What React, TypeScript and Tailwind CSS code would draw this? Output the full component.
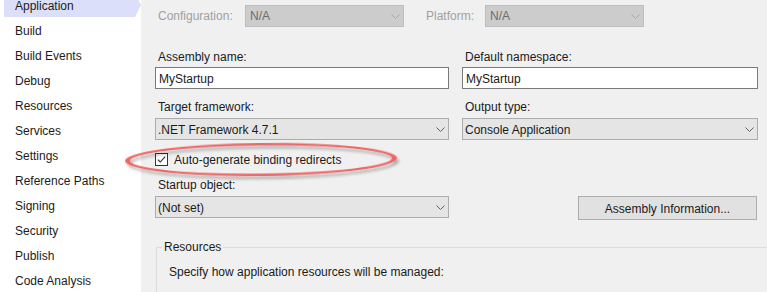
import React from "react";

const navItems = [
  "Application",
  "Build",
  "Build Events",
  "Debug",
  "Resources",
  "Services",
  "Settings",
  "Reference Paths",
  "Signing",
  "Security",
  "Publish",
  "Code Analysis",
];

function Chevron({ color = "#606060" }: { color?: string }) {
  return (
    <svg width="9" height="5" viewBox="0 0 9 5" className="shrink-0">
      <path d="M0.5 0.5 L4.5 4.5 L8.5 0.5" fill="none" stroke={color} strokeWidth="1" />
    </svg>
  );
}

function Select({ value, className = "" }: { value: string; className?: string }) {
  return (
    <div
      className={`flex items-center justify-between h-[22px] border border-[#acacac] bg-[#e5e5e5] pl-[2px] pr-[3px] text-[#1b1b1b] ${className}`}
    >
      <span className="leading-[16px] pt-[1px]">{value}</span>
      <Chevron />
    </div>
  );
}

function DisabledSelect({ value }: { value: string }) {
  return (
    <div className="flex items-center justify-between w-[159px] h-[22px] border border-[#bfbfbf] bg-[#cccccc] pl-[4px] pr-[3px] text-[#6d6d6d]">
      <span className="leading-[16px]">{value}</span>
      <Chevron color="#a6a6a6" />
    </div>
  );
}

function TextInput({ value }: { value: string }) {
  return (
    <div className="flex items-center h-[22px] border border-[#7a7a7a] bg-white pl-[3px] text-[#1b1b1b]">
      <span className="leading-[16px] pt-[2px]">{value}</span>
    </div>
  );
}

function Label({ children }: { children: React.ReactNode }) {
  return <div className="h-[16px] leading-[16px] pl-[3px] text-[#1b1b1b]">{children}</div>;
}

export default function App() {
  return (
    <div className="relative flex w-[767px] h-[292px] overflow-hidden font-['Liberation_Sans',Arial,sans-serif] text-[12px]">
      {/* Sidebar */}
      <div className="w-[141px] shrink-0 bg-white flex flex-col">
        <div className="-mt-[7px] flex flex-col">
          {navItems.map((item, i) => (
            <div key={item} className="relative h-[25px] flex items-center">
              {i === 0 && (
                <div className="absolute left-[4px] top-0 w-[131px] h-[24px] bg-[#dbdff9]">
                  <span className="absolute left-full top-0 w-0 h-0 border-y-[12px] border-y-transparent border-l-[6px] border-l-[#dbdff9]" />
                </div>
              )}
              <span className="relative pl-[15px] pt-[1px] leading-[16px] text-[#1b1b1b]">{item}</span>
            </div>
          ))}
        </div>
      </div>

      {/* Main panel */}
      <div className="flex-1 bg-[#f0f0f0] pl-[14px] pr-[10px] flex flex-col overflow-hidden">
        {/* Configuration row */}
        <div className="mt-[5px] flex items-center h-[22px]">
          <div className="w-[90px] pl-[3px] text-[#a0a0a0] leading-[16px]">Configuration:</div>
          <DisabledSelect value="N/A" />
          <div className="ml-[22px] w-[59px] text-[#a0a0a0] leading-[16px]">Platform:</div>
          <DisabledSelect value="N/A" />
        </div>

        <div className="mt-[16px] h-px bg-[#a0a0a0] ml-[1px] -mr-[10px]" />

        {/* Grid of fields */}
        <div className="mt-[6px] grid grid-cols-[294px_296px] gap-x-[13px]">
          <div className="flex flex-col">
            <Label>Assembly name:</Label>
            <div className="mt-[2px]">
              <TextInput value="MyStartup" />
            </div>
            <div className="mt-[10px]">
              <Label>Target framework:</Label>
            </div>
            <Select value=".NET Framework 4.7.1" className="mt-[3px]" />
          </div>
          <div className="flex flex-col">
            <Label>Default namespace:</Label>
            <div className="mt-[2px]">
              <TextInput value="MyStartup" />
            </div>
            <div className="mt-[10px]">
              <Label>Output type:</Label>
            </div>
            <Select value="Console Application" className="mt-[3px]" />
          </div>
        </div>

        {/* Checkbox */}
        <div className="mt-[13px] flex items-center h-[13px]">
          <div className="w-[13px] h-[13px] border border-[#333333] bg-white flex items-center justify-center">
            <svg width="11" height="11" viewBox="0 0 11 11">
              <path d="M1.8 5.6 L4.2 8 L9.2 2.6" fill="none" stroke="#2b2b2b" strokeWidth="1.1" />
            </svg>
          </div>
          <span className="ml-[6px] leading-[16px] text-[#1b1b1b]">Auto-generate binding redirects</span>
        </div>

        {/* Startup object row */}
        <div className="mt-[11px] flex gap-x-[13px]">
          <div className="w-[294px] flex flex-col">
            <Label>Startup object:</Label>
            <Select value="(Not set)" className="mt-[3px]" />
          </div>
          <div className="w-[296px] flex justify-end items-start">
            <button className="mt-[19px] w-[179px] h-[24px] border border-[#adadad] bg-[#e1e1e1] text-[#1b1b1b] leading-[16px] pt-[2px]">
              Assembly Information...
            </button>
          </div>
        </div>

        {/* Resources group */}
        <fieldset className="mt-[19px] ml-[1px] -mr-[30px] border border-b-0 border-[#dcdcdc] px-0 pt-[9px] pb-[20px]">
          <legend className="ml-[5px] px-[2px] leading-[16px] text-[#1b1b1b]">Resources</legend>
          <div className="pl-[12px] leading-[16px] text-[#1b1b1b]">
            Specify how application resources will be managed:
          </div>
        </fieldset>
      </div>

      {/* Red annotation ellipse */}
      <svg
        className="absolute left-[120px] top-[136px] pointer-events-none"
        width="290"
        height="50"
        viewBox="0 0 290 50"
      >
        <defs>
          <filter id="sh" x="-10%" y="-50%" width="120%" height="200%">
            <feDropShadow dx="2" dy="3" stdDeviation="1.6" floodColor="#000000" floodOpacity="0.3" />
          </filter>
        </defs>
        <g transform="rotate(-0.6 141 23.5)" filter="url(#sh)">
          <path
            fillRule="evenodd"
            fill="#ef6868"
            d="M5 23.5 A136 16.5 0 1 0 277 23.5 A136 16.5 0 1 0 5 23.5 Z M10 23.5 A131 14 0 1 1 272 23.5 A131 14 0 1 1 10 23.5 Z"
          />
        </g>
      </svg>
    </div>
  );
}
